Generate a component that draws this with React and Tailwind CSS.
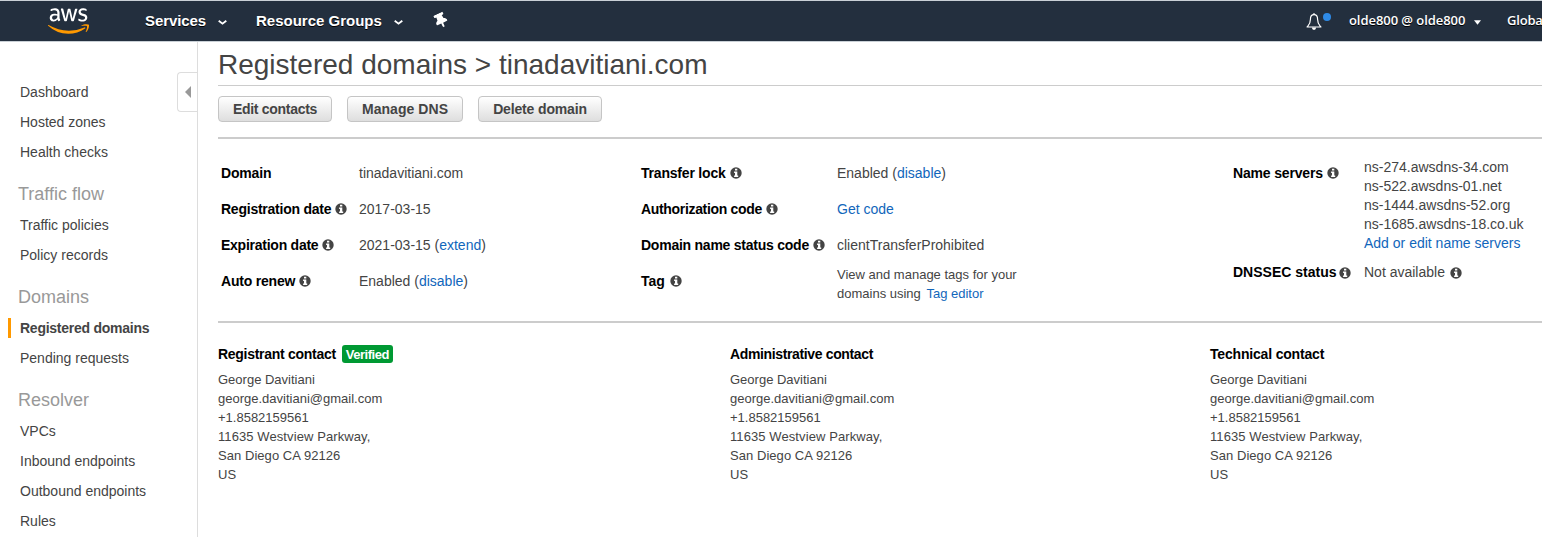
import { FaAws, FaThumbtack } from "react-icons/fa";

function Info({ className = "" }) {
  return (
    <svg viewBox="0 0 12 12" className={`inline-block size-[12px] shrink-0 ${className}`}>
      <circle cx="6" cy="6" r="5.700" fill="#444" />
      <path d="M5 1.700h2.300v1.800H5zM4.100 4.600h3.200v4h.9v1.500H4.100V8.600H5V6h-.9z" fill="white" />
    </svg>
  );
}

const Link = ({ children }) => <a className="text-[#1166bb]">{children}</a>;

function Chevron({ className = "" }) {
  return (
    <svg viewBox="0 0 9 5" className={`h-[5px] w-[9px] fill-none stroke-white ${className}`} strokeWidth="1.8">
      <path d="M.7.7l3.800 3L8.300.7" />
    </svg>
  );
}

function Header() {
  return (
    <header className="flex h-[42px] w-full items-start overflow-hidden border-y border-[#c9d0d6] bg-[#232f3e] text-white">
      <div className="grid h-10 w-[145px] shrink-0 pl-12">
        <FaAws className="col-start-1 row-start-1 mt-[3px] h-[34px] w-[41px] [clip-path:inset(0_0_45%_0)]" preserveAspectRatio="none" />
        <FaAws className="col-start-1 row-start-1 mt-[3px] h-[34px] w-[41px] text-[#f90] [clip-path:inset(55%_0_0_0)]" preserveAspectRatio="none" />
      </div>
      <div className="flex h-10 w-[111px] shrink-0 items-center text-[15px] font-bold [text-shadow:0_1px_0_#000]">
        <span className="tracking-[-0.1px]">Services</span>
        <Chevron className="ml-[12px] mt-[2px]" />
      </div>
      <div className="flex h-10 w-[178px] shrink-0 items-center text-[15px] font-bold [text-shadow:0_1px_0_#000]">
        <span className="whitespace-nowrap">Resource Groups</span>
        <Chevron className="ml-[12px] mt-[2px]" />
      </div>
      <FaThumbtack className="ml-px mt-[12px] h-[15px] w-[12px] shrink-0 -rotate-[25deg]" preserveAspectRatio="none" />
      <div className="flex-1" />
      <svg viewBox="0 0 16 18" className="mt-[12px] h-[18px] w-4 shrink-0 fill-none stroke-white" strokeWidth="1.2">
        <path d="M8 1.700C5.300 1.700 4.400 4 4.400 6.500c0 4.500-1.400 5.300-3.300 7.500h13.800c-1.900-2.200-3.300-3-3.300-7.500C11.600 4 10.700 1.700 8 1.700z" strokeLinejoin="round" />
        <path d="M8 .3v1.500" strokeWidth="1.500" />
        <path d="M5.900 14.600a2.100 2.400 0 0 0 4.200 0z" fill="white" stroke="none" />
      </svg>
      <div className="ml-[1px] mt-[12px] size-2 shrink-0 rounded-full bg-[#2e8ae6]" />
      <div className="ml-[18px] flex h-10 w-[158px] shrink-0 items-center font-['Open_Sans',sans-serif] text-[13px] font-semibold [text-shadow:0_1px_0_#000]">
        <span className="whitespace-nowrap tracking-[-0.06px]">olde800 @ olde800</span>
        <svg viewBox="0 0 8 5" className="ml-[9px] mt-[3px] h-[5px] w-[7px] fill-white">
          <path d="M0 0h8L4 5z" />
        </svg>
      </div>
      <div className="flex h-10 w-[35px] shrink-0 items-center font-['Open_Sans',sans-serif] text-[13px] font-semibold tracking-[-0.2px] [text-shadow:0_1px_0_#000]">
        Globa
      </div>
    </header>
  );
}

const navGroups = [
  { items: ["Dashboard", "Hosted zones", "Health checks"] },
  { title: "Traffic flow", items: ["Traffic policies", "Policy records"] },
  { title: "Domains", items: ["Registered domains", "Pending requests"] },
  { title: "Resolver", items: ["VPCs", "Inbound endpoints", "Outbound endpoints", "Rules"] },
];

function Sidebar() {
  return (
    <aside className="relative h-[495px] w-[198px] shrink-0 overflow-hidden border-r border-[#ddd] pt-[35px] text-[14px] text-[#444]">
      {navGroups.map((g, i) => (
        <div key={i}>
          {g.title && (
            <h2 className="mt-3 h-[31px] pl-[18px] text-[18px] leading-[31px] text-[#999]">{g.title}</h2>
          )}
          {g.items.map((t) =>
            t === "Registered domains" ? (
              <div key={t} className="flex h-[30px] items-center pl-2 font-bold">
                <div className="mr-[9px] h-5 w-[3px] bg-[#f90]" />
                <span className="tracking-[-0.25px]">{t}</span>
              </div>
            ) : (
              <div key={t} className="h-[30px] pl-5 leading-[30px]">{t}</div>
            )
          )}
        </div>
      ))}
      <div className="absolute -right-px top-[30px] flex h-10 w-[21px] items-center rounded-l-[4px] border border-r-0 border-[#ddd] bg-white pl-[7px]">
        <svg viewBox="0 0 7 11" preserveAspectRatio="none" className="h-[12px] w-[6px] fill-[#999]">
          <path d="M7 0v11L0 5.500z" />
        </svg>
      </div>
    </aside>
  );
}

function Button({ children, className }) {
  return (
    <button className={`h-[26px] rounded-[4px] border border-[#c5c5c5] bg-linear-to-b from-white to-[#dedede] text-[14px] leading-6 font-bold text-[#444] ${className}`}>
      {children}
    </button>
  );
}

function Row({ label, info = true, children, cols, track = "" }) {
  return (
    <div className={`grid h-9 items-center ${cols}`}>
      <div className="flex items-center whitespace-nowrap font-bold text-black">
        <span className={track}>{label}</span>
        {info && <Info className="-mt-px ml-1" />}
      </div>
      <div className="whitespace-nowrap">{children}</div>
    </div>
  );
}

function Details() {
  const a = "grid-cols-[138px_1fr]";
  const b = "grid-cols-[196px_1fr]";
  return (
    <section className="flex h-[184px] border-b-2 border-[#ccc] pl-[3px] pt-4 text-[14px] leading-[19px]">
      <div className="w-[420px] shrink-0">
        <Row cols={a} label="Domain" track="tracking-[-0.17px]" info={false}>tinadavitiani.com</Row>
        <Row cols={a} label="Registration date" track="tracking-[-0.24px]">2017-03-15</Row>
        <Row cols={a} label="Expiration date" track="tracking-[-0.25px]">2021-03-15 (<Link>extend</Link>)</Row>
        <Row cols={a} label="Auto renew" track="tracking-[-0.2px]">Enabled (<Link>disable</Link>)</Row>
      </div>
      <div className="w-[592px] shrink-0">
        <Row cols={b} label="Transfer lock" track="tracking-[-0.2px]">Enabled (<Link>disable</Link>)</Row>
        <Row cols={b} label="Authorization code" track="tracking-[-0.33px]"><Link>Get code</Link></Row>
        <Row cols={b} label="Domain name status code" track="tracking-[-0.24px]">clientTransferProhibited</Row>
        <div className="grid grid-cols-[196px_1fr]">
          <div className="flex h-9 items-center font-bold text-black">Tag<Info className="-mt-px ml-[5px]" /></div>
          <div className="pt-0.5 text-[13px] leading-[19px]">
            View and manage tags for your<br />domains using <span className="ml-[2px]"><Link>Tag editor</Link></span>
          </div>
        </div>
      </div>
      <div className="grid flex-1 grid-cols-[131px_1fr] content-start">
        <div className="flex h-9 items-center whitespace-nowrap font-bold text-black"><span className="tracking-[-0.17px]">Name servers</span><Info className="-mt-px ml-1" /></div>
        <div className="whitespace-nowrap pt-[3px]">
          <div>ns-274.awsdns-34.com</div>
          <div>ns-522.awsdns-01.net</div>
          <div>ns-1444.awsdns-52.org</div>
          <div>ns-1685.awsdns-18.co.uk</div>
          <div><Link>Add or edit name servers</Link></div>
        </div>
        <div className="mt-[10px] flex items-center whitespace-nowrap font-bold text-black">DNSSEC status<Info className="ml-[3px]" /></div>
        <div className="mt-[10px] flex items-center whitespace-nowrap">Not available<Info className="ml-[5px]" /></div>
      </div>
    </section>
  );
}

function Contact({ title, verified, track, className }) {
  return (
    <div className={`shrink-0 ${className}`}>
      <div className="flex h-[18px] items-center text-[14px] font-bold text-black">
        <span className={`whitespace-nowrap ${track}`}>{title}</span>
        {verified && (
          <span className="ml-[6px] h-[18px] w-[51px] rounded-[3px] bg-[#093] text-center text-[13px] leading-[19px] tracking-[-0.45px] text-white">Verified</span>
        )}
      </div>
      <div className="mt-[7px] text-[13px] leading-[19px]">
        <div>George Davitiani</div>
        <div>george.davitiani@gmail.com</div>
        <div>+1.8582159561</div>
        <div className="tracking-[0.09px]">11635 Westview Parkway,</div>
        <div className="tracking-[0.05px]">San Diego CA 92126</div>
        <div>US</div>
      </div>
    </div>
  );
}

export default function App() {
  return (
    <div className="h-[537px] w-[1542px] overflow-hidden bg-white font-['Liberation_Sans',Arial,sans-serif] text-[#444]">
      <Header />
      <div className="flex">
        <Sidebar />
        <main className="w-[1344px] overflow-hidden pl-5">
          <h1 className="h-[44px] whitespace-nowrap border-b border-[#ccc] text-[28px] leading-[45px]">
            Registered domains &gt; tinadavitiani.com
          </h1>
          <div className="flex h-[53px] border-b-2 border-[#ccc] pt-[10px]">
            <Button className="w-[114px] tracking-[-0.3px]">Edit contacts</Button>
            <Button className="ml-[15px] w-[116px] tracking-[0.05px]">Manage DNS</Button>
            <Button className="ml-[15px] w-[124px] tracking-[-0.15px]">Delete domain</Button>
          </div>
          <Details />
          <div className="flex pt-[22px]">
            <Contact title="Registrant contact" track="tracking-[-0.28px]" verified className="w-[512px]" />
            <Contact title="Administrative contact" track="tracking-[-0.36px]" className="w-[480px]" />
            <Contact title="Technical contact" track="tracking-[-0.18px]" className="w-[300px]" />
          </div>
        </main>
      </div>
    </div>
  );
}
